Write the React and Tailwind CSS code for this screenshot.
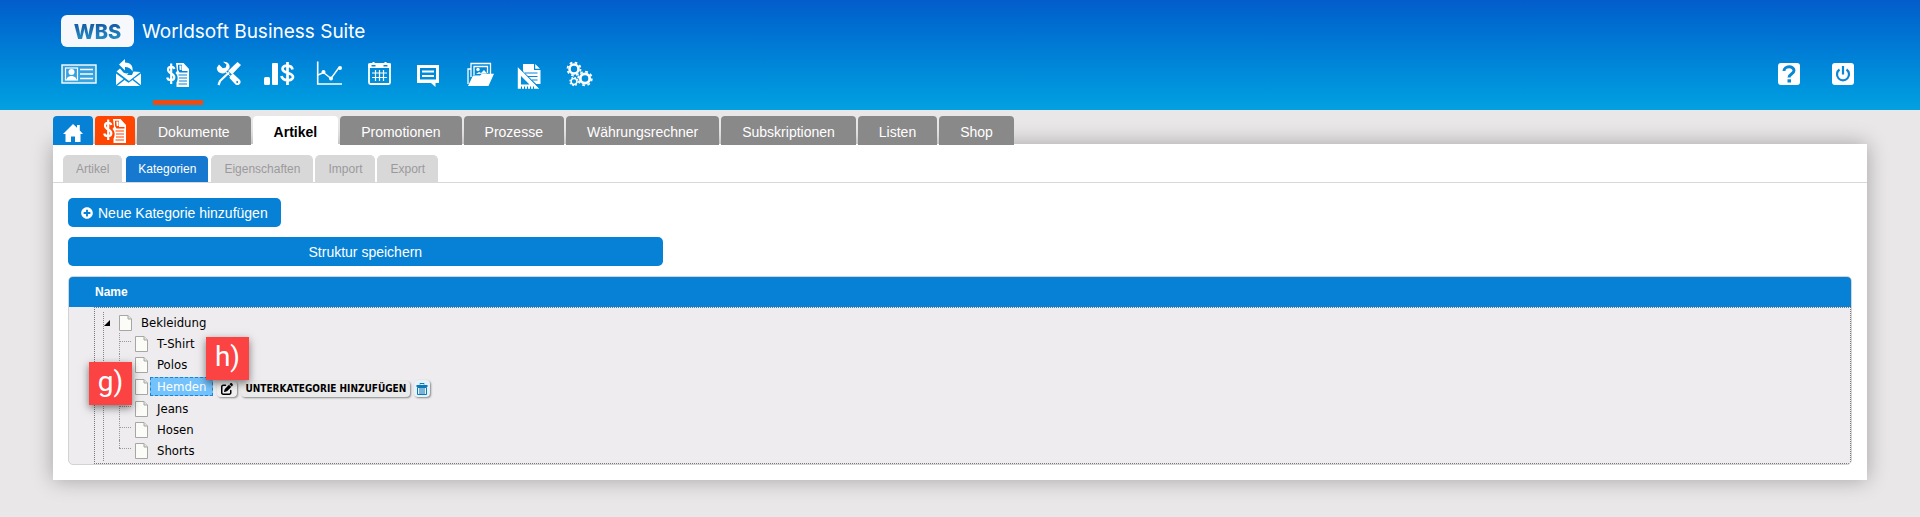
import { FaPlusCircle } from 'react-icons/fa'
import { FaPenToSquare } from 'react-icons/fa6'

function NavSvg({ children }) {
  return (
    <svg className="h-[30px] w-10" viewBox="0 0 40 30" fill="white" stroke="none" aria-hidden="true">
      {children}
    </svg>
  )
}

function InvoiceIcon({ className, cut }) {
  return (
    <svg className={className} viewBox="0 0 24 25" fill="white" aria-hidden="true">
      <path d="M8.300 7C7.800 4.300 2 4 2 7.700c0 4.200 6.300 3.500 6.300 7.500 0 4-6.500 3.800-7.100.3M5.200 1.500v20.500" fill="none" stroke="white" strokeWidth="2.200" />
      <path d="M10 1h7.500l5.500 6v18H10.500v-4.500c1.800-3 1.500-7-1-9.500L11 9z" />
      <path d="M12 2.800h4V9h5.500v1.500H13.500L12 8z" fill={cut} />
      <path d="M13.300 3.500h2.200v4.500h-1.800z" />
      <path d="M12.500 13h8.500M13 16h8M13 19h8M12.500 22h8.500" stroke={cut} strokeWidth="1.200" />
    </svg>
  )
}

function HomeIcon() {
  return (
    <svg className="h-[18px] w-5" viewBox="0 0 20 18" fill="white" aria-hidden="true">
      <path d="M10 0l4 3.800V1h2.800v5.500L20 10h-2.500v8H12v-5.500H8V18H2.500v-8H0z" />
    </svg>
  )
}

function ContactIcon() {
  return (
    <NavSvg>
      <rect x="4" y="6" width="34" height="18" fill="white" fillOpacity=".2" stroke="white" strokeWidth="1.400" />
      <rect x="7.500" y="9" width="12" height="12" fill="none" stroke="white" strokeWidth="1.200" />
      <circle cx="13.500" cy="13" r="3" />
      <path d="M8.500 21c.3-3 2.500-3.500 4-4h2c1.500.5 3.700 1 4 4z" />
      <path d="M22 10.500h13M22 15h13M22 19.500h13" stroke="white" strokeWidth="1.300" />
    </NavSvg>
  )
}

function MailIcon() {
  return (
    <NavSvg>
      <path d="M8 14.500l7.500 5.500L8 26zM33 14.500L25.500 20l7.500 6zM9 27l7.500-6 4 2.800 4-2.800 7.500 6z" />
      <path d="M8.500 12.500l3.500-3 3 3.500c1.500 1.500 3.500 1.800 5.500 1l-1.500 2h5l1.500-3.500 7 .5-11.500 9z" />
      <path d="M11 5.500L17 0v3.500c5 0 8.500 3 7.500 9C23 9.500 20.500 8 17 8v3.500z" />
    </NavSvg>
  )
}

function ToolsIcon() {
  return (
    <NavSvg>
      <path d="M11 4.500l3.800 3.800 3-.8.700-3L15 1.800c3.800-.8 7.500 2.200 6.500 6.200l-1 1.500-3.500 3.500c-3.800 1.500-8.300-.8-8.200-5.200z" transform="translate(0 1)" />
      <path d="M16 11l14 13.500" stroke="white" strokeWidth="1" />
      <path d="M22 17l3-2.500 7 6.500c2 3-1.500 6.500-4.500 4.500L21.500 19z" />
      <path d="M10.500 26l1.500-4 9-8.500" fill="none" stroke="white" strokeWidth="2.200" />
      <path d="M20 12l9.500-9 3.500 3-9 9.500z" />
      <circle cx="29.200" cy="23" r="1" fill="#0583d6" />
    </NavSvg>
  )
}

function SalesIcon() {
  return (
    <NavSvg>
      <rect x="6" y="18" width="6" height="8" rx="1.500" />
      <rect x="14" y="4" width="6" height="22" rx="1" />
      <path d="M34.500 10.500c-1-5-10-5-10-.8 0 5.300 10.500 3.300 10.500 8.300 0 4.500-10.500 4.500-11.500-1M29.500 3v23" fill="none" stroke="white" strokeWidth="2.700" />
    </NavSvg>
  )
}

function ChartIcon() {
  return (
    <NavSvg>
      <path d="M9.700 2.500V25H34" fill="none" stroke="white" strokeWidth="1.600" />
      <path d="M10 16l5.500-2.500 7.500 6 8-11" fill="none" stroke="white" strokeWidth="1.400" />
      <circle cx="15.500" cy="13" r="2" />
      <circle cx="23" cy="19.500" r="2" />
      <circle cx="32" cy="9" r="2" />
    </NavSvg>
  )
}

function CalendarIcon() {
  return (
    <NavSvg>
      <rect x="11" y="5" width="21" height="20" rx="1.500" fill="none" stroke="white" strokeWidth="1.800" />
      <path d="M10.200 4.500h3.300v3h4v-3h8v3h4v-3H33V9H10.200z" />
      <path d="M15.500 3v3M27.500 3v3" stroke="white" strokeWidth="2" />
      <path d="M14 14h15M14 18.500h15M17.500 11v11M21.500 11v11M25.500 11v11" stroke="white" strokeWidth="1.200" />
    </NavSvg>
  )
}

function ChatIcon() {
  return (
    <NavSvg>
      <path fillRule="evenodd" d="M9 6h22v18h-3.500v4L23 24H9zM12 9v11.500h16V9z" />
      <path d="M14 12.500h12M14 17h12" stroke="white" strokeWidth="1.800" />
    </NavSvg>
  )
}

function MediaIcon() {
  return (
    <NavSvg>
      <path d="M10 25V10h2.500M13 18V4.500h19.500V15M16 16V7.500h13.500V14" fill="none" stroke="white" strokeWidth="1.300" />
      <circle cx="20" cy="10.500" r="1.700" />
      <path d="M18 15l3-2 2 1 3-3 3 3.500z" />
      <path d="M15 16.500h7l2-1.800h12L30.500 27H10z" />
    </NavSvg>
  )
}

function DesignIcon() {
  return (
    <NavSvg>
      <path d="M15 5h11v6h6.500v14H28L15 13z" />
      <path d="M27.200 5l4.800 4.800h-4.800z" />
      <path d="M17 14h12.500M20 17.500h9.500M24 21h5.500" stroke="#0687d8" strokeWidth="1.200" />
      <path fillRule="evenodd" d="M9.800 8l21.500 21.700H9.800zM13 17v8.500h8.500z" />
      <path d="M10 7.500l22 22" stroke="#0687d8" strokeWidth=".8" />
      <path d="M13.500 27.500v2.500M16.500 27.500v2.500M19.500 27.500v2.500M22.500 27.500v2.500M25.500 27.500v2.500" stroke="#0687d8" />
    </NavSvg>
  )
}

function GearsIcon() {
  return (
    <NavSvg>
      <g fill="none" stroke="white">
        <circle cx="16" cy="10" r="4.500" strokeWidth="2.600" />
        <circle cx="16" cy="10" r="6.500" strokeWidth="1.800" strokeDasharray="2.600 2.500" />
        <circle cx="27" cy="19.500" r="4.700" strokeWidth="2.800" />
        <circle cx="27" cy="19.500" r="6.800" strokeWidth="1.800" strokeDasharray="2.750 2.590" />
        <circle cx="16" cy="22.500" r="2.900" strokeWidth="1.500" />
        <circle cx="16" cy="22.500" r="4.100" strokeWidth="1.200" strokeDasharray="1.600 1.620" />
      </g>
    </NavSvg>
  )
}

function PageIcon() {
  return (
    <svg className="h-4 w-[13px] shrink-0" viewBox="0 0 13 16" aria-hidden="true">
      <path d="M.5.500h8.500l3.500 3.500v11.500H.5z" fill="#fbfbf8" stroke="#a6a6a2" />
      <path d="M9 .5V4h3.500" fill="#e2e2de" stroke="#a6a6a2" />
    </svg>
  )
}

function TrashIcon() {
  return (
    <svg className="h-3 w-3" viewBox="0 0 12 12" fill="none" stroke="#0b78b8" aria-hidden="true">
      <path d="M4 1.500V.5h4v1M.5 2.500h11M.5 3.500h11M1.500 4.500h9v7h-9zM4 5v6M6 5v6M8 5v6" />
    </svg>
  )
}

const navItems = [
  { label: 'Kontakte', icon: <ContactIcon /> },
  { label: 'E-Mail', icon: <MailIcon /> },
  { label: 'Faktura', icon: <InvoiceIcon className="h-[25px] w-6" cut="#0583d6" />, active: true },
  { label: 'Werkzeuge', icon: <ToolsIcon /> },
  { label: 'Verkauf', icon: <SalesIcon /> },
  { label: 'Statistik', icon: <ChartIcon /> },
  { label: 'Kalender', icon: <CalendarIcon /> },
  { label: 'Nachrichten', icon: <ChatIcon /> },
  { label: 'Medien', icon: <MediaIcon /> },
  { label: 'Design', icon: <DesignIcon /> },
  { label: 'Einstellungen', icon: <GearsIcon /> },
]

const tabs = ['Dokumente', 'Artikel', 'Promotionen', 'Prozesse', 'Währungsrechner', 'Subskriptionen', 'Listen', 'Shop']
const subTabs = ['Artikel', 'Kategorien', 'Eigenschaften', 'Import', 'Export']
const categories = ['T-Shirt', 'Polos', 'Hemden', 'Jeans', 'Hosen', 'Shorts']

function Header() {
  return (
    <header className="flex h-[110px] flex-col bg-gradient-to-b from-[#045dcb] to-[#03a1e1] pt-[15px]">
      <div className="flex items-center gap-2 pl-[61px]">
        <div className="flex h-8 w-[73px] items-center justify-center rounded-md bg-[#f6f8fc] pt-0.5">
          <span className="bg-gradient-to-b from-[#154f9f] to-[#2a9ccb] bg-clip-text font-['Inter'] text-xl leading-6 font-extrabold text-transparent">WBS</span>
        </div>
        <span className="pt-0.5 font-['Inter',sans-serif] text-[19px] leading-6 text-white">Worldsoft Business Suite</span>
      </div>
      <div className="flex justify-between pr-[66px] pl-[53px]">
        <nav className="flex">
          {navItems.map((item) => (
            <a key={item.label} href="#" aria-label={item.label} className="flex w-[50px] flex-col items-center pt-3">
              <span className="flex h-[30px] items-center justify-center">{item.icon}</span>
              {item.active && <span className="mt-[11px] h-[5px] w-full bg-[#ee4b14]" />}
            </a>
          ))}
        </nav>
        <div className="flex gap-8 pt-4">
          <button aria-label="Hilfe" className="h-[22px] w-[22px]">
            <svg viewBox="0 0 22 22" aria-hidden="true">
              <rect width="22" height="22" rx="3" fill="white" />
              <path d="M6 8c0-5.500 10-5.500 10-.5 0 3.500-5 3.500-5 7" fill="none" stroke="#0a86d6" strokeWidth="3" />
              <rect x="9.500" y="16.300" width="3.500" height="3.200" fill="#0a86d6" />
            </svg>
          </button>
          <button aria-label="Abmelden" className="h-[22px] w-[22px]">
            <svg viewBox="0 0 22 22" aria-hidden="true">
              <rect width="22" height="22" rx="3" fill="white" />
              <path d="M7.500 6.500a6 6 0 1 0 7 0M11 3v8.500" fill="none" stroke="#0a86d6" strokeWidth="2.200" />
            </svg>
          </button>
        </div>
      </div>
    </header>
  )
}

function Tabs() {
  return (
    <nav className="relative z-10 -mb-px flex h-[29px] gap-0.5 text-sm text-white">
      <a href="#" aria-label="Start" className="flex w-10 items-center justify-center rounded-t bg-[#0681d6] pt-1">
        <HomeIcon />
      </a>
      <a href="#" aria-label="Faktura" className="flex w-10 items-center justify-center rounded-t bg-[#ff4500]">
        <InvoiceIcon className="h-[25px] w-6" cut="#ff4500" />
      </a>
      {tabs.map((tab) => (
        <a
          key={tab}
          href="#"
          className={`flex items-center rounded-t px-[21px] pt-0.5 ${tab === 'Artikel' ? 'bg-white font-bold text-black' : 'bg-[#8a8989]'}`}
        >
          {tab}
        </a>
      ))}
    </nav>
  )
}

function SubTabs() {
  return (
    <nav className="flex gap-0.5 border-b border-[#d8d8d8] pt-[11px] pl-2.5 text-xs">
      {subTabs.map((tab) => (
        <a
          key={tab}
          href="#"
          className={`flex h-[27px] items-center rounded-t-[5px] border border-b-0 px-3 ${
            tab === 'Kategorien' ? 'ml-px border-white bg-[#1679cf] text-white' : 'border-[#d9d8d9] bg-[#d9d8d9] text-[#9b9a9b]'
          }`}
        >
          {tab}
        </a>
      ))}
    </nav>
  )
}

function CategoryActions() {
  return (
    <div className="flex items-center gap-1 pt-1 pl-1">
      <button aria-label="Bearbeiten" className="flex h-4 w-5 items-center justify-center rounded-sm bg-[#f1f0f1] text-black shadow-[1px_1px_2px_#888]">
        <FaPenToSquare className="h-3 w-3" />
      </button>
      <button className="h-4 rounded-sm bg-[#ebeaeb] px-1 font-['DejaVu_Sans_Condensed','DejaVu_Sans',sans-serif] text-[10px] leading-4 font-bold text-black shadow-[1px_1px_2px_#888] font-stretch-semi-condensed">
        UNTERKATEGORIE HINZUFÜGEN
      </button>
      <button aria-label="Löschen" className="flex h-[17px] w-4 items-center justify-center rounded-sm bg-[#e6f1f8] shadow-[1px_1px_2px_#888]">
        <TrashIcon />
      </button>
    </div>
  )
}

function CategoryTree() {
  return (
    <div className="ml-[25px] border border-dotted border-[#777] pt-1 pb-0.5 pl-2 font-['DejaVu_Sans_Condensed','DejaVu_Sans',sans-serif] text-[13px] text-black font-stretch-semi-condensed">
      <ul className="border-l border-dotted border-[#888]">
        <li>
          <div className="flex h-[21px] items-center">
            <button aria-label="Bekleidung zuklappen" className="mr-[9px] h-[21px] w-1.5">
              <svg className="h-1.5 w-1.5" viewBox="0 0 6 6" aria-hidden="true">
                <path d="M6 0v6H0z" />
              </svg>
            </button>
            <PageIcon />
            <span className="px-[9px] leading-[18px]">Bekleidung</span>
          </div>
          <ul className="pl-[15px]">
            {categories.map((name, index) => (
              <li key={name} className={`relative flex items-center ${name === 'Hemden' ? 'h-[23px]' : 'h-[21px]'}`}>
                <span className={`absolute top-0 left-0 border-l border-dotted border-[#999] ${index === categories.length - 1 ? 'h-2' : 'h-full'}`} />
                <span className="mr-1 mb-1 w-3 border-t border-dotted border-[#999]" />
                <PageIcon />
                {name === 'Hemden' ? (
                  <>
                    <span className="ml-0.5 border border-dashed border-[#1a86d0] bg-[#73c2fb] px-1.5 leading-[17px] text-white">{name}</span>
                    <CategoryActions />
                  </>
                ) : (
                  <span className="px-[9px] leading-[18px]">{name}</span>
                )}
              </li>
            ))}
          </ul>
        </li>
      </ul>
    </div>
  )
}

function Marker({ className, children }) {
  return (
    <div className={`absolute flex h-[43px] w-[43px] items-center justify-center bg-[#fc4344] pb-1 font-['Roboto',sans-serif] text-[28px] text-white shadow-[0_3px_8px_rgba(0,0,0,0.5)] ${className}`}>
      {children}
    </div>
  )
}

export default function App() {
  return (
    <div className="min-h-screen bg-[#e9e7e8] font-['Liberation_Sans',Arial,sans-serif]">
      <Header />
      <main className="px-[53px] pt-1.5 pb-9">
        <Tabs />
        <section className="bg-white shadow-[0_0_20px_rgba(0,0,0,0.3)]">
          <SubTabs />
          <div className="p-[15px]">
            <button className="flex h-[29px] items-center gap-[5px] rounded-[5px] bg-[#0681d6] px-[13px] text-sm text-white">
              <FaPlusCircle className="h-3 w-3" />
              Neue Kategorie hinzufügen
            </button>
            <button className="mt-2.5 h-[29px] w-1/3 rounded-[5px] bg-[#0681d6] text-sm text-white">Struktur speichern</button>
            <div className="relative mt-2.5">
              <div className="overflow-hidden rounded-[5px] border border-[#d4d3d4] bg-[#eeecee]">
                <table className="w-full">
                  <thead>
                    <tr>
                      <th className="h-[30px] bg-[#0681d6] pl-[26px] text-left text-xs font-bold text-white">Name</th>
                    </tr>
                  </thead>
                  <tbody>
                    <tr>
                      <td>
                        <CategoryTree />
                      </td>
                    </tr>
                  </tbody>
                </table>
              </div>
              <Marker className="top-[86px] left-[21px]">g)</Marker>
              <Marker className="top-[61px] left-[138px]">h)</Marker>
            </div>
          </div>
        </section>
      </main>
    </div>
  )
}
